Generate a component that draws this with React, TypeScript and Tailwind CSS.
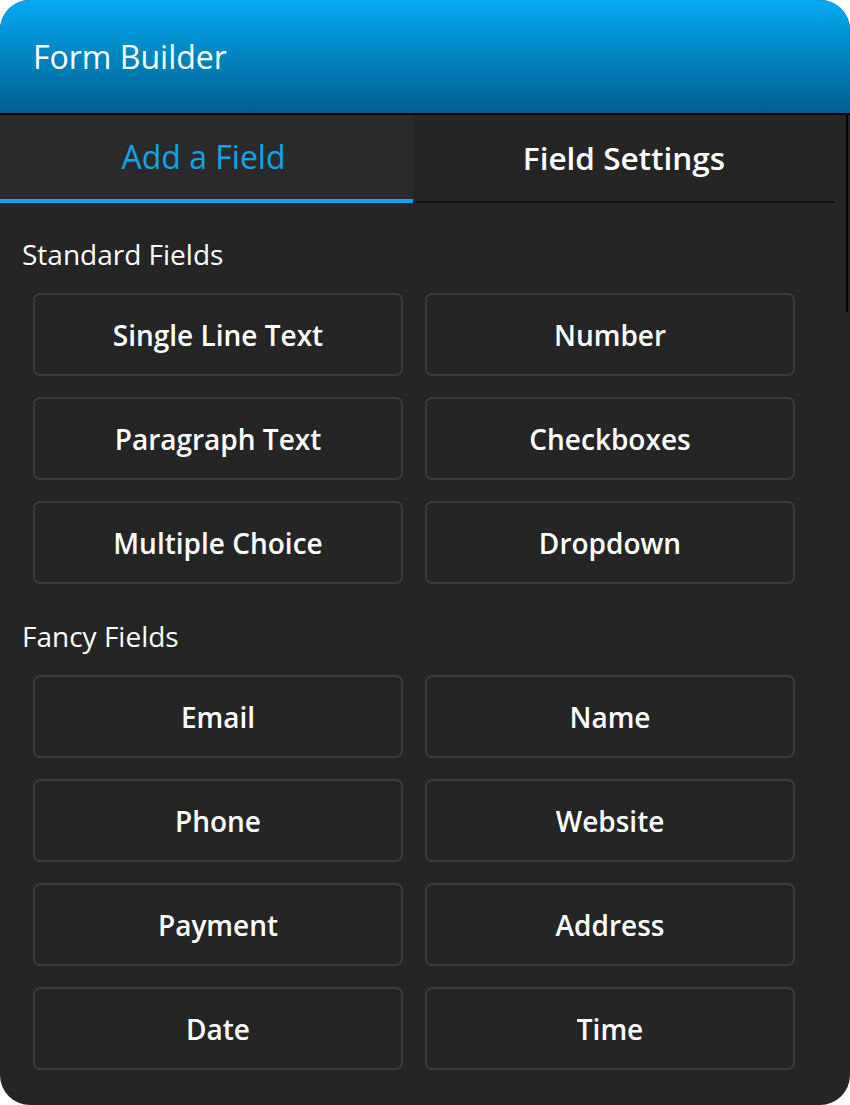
const standardFields = [
  "Single Line Text",
  "Number",
  "Paragraph Text",
  "Checkboxes",
  "Multiple Choice",
  "Dropdown",
];

const fancyFields = [
  "Email",
  "Name",
  "Phone",
  "Website",
  "Payment",
  "Address",
  "Date",
  "Time",
];

function FieldGrid({ fields }: { fields: string[] }) {
  return (
    <div className="ml-[11px] grid w-[762px] grid-cols-2 gap-x-[22px] gap-y-[21px]">
      {fields.map((f) => (
        <button
          key={f}
          className="flex h-[83px] items-center justify-center rounded-[7px] border-2 border-[#3c3c3c] bg-[#252525] text-[28px] font-semibold text-white"
        >
          {f}
        </button>
      ))}
    </div>
  );
}

export default function App() {
  return (
    <div
      className="min-h-[1105px] w-[850px] bg-white"
      style={{ fontFamily: '"Open Sans", "Noto Sans", sans-serif' }}
    >
      <div className="flex h-[1105px] flex-col overflow-hidden rounded-[30px] bg-[#252525]">
        {/* header */}
        <div className="flex h-[113px] shrink-0 items-center bg-gradient-to-b from-[#04aaf4] to-[#006090] px-[33px]">
          <h1 className="text-[32px] leading-none text-white">Form Builder</h1>
        </div>
        <div className="h-[2px] shrink-0 bg-black" />

        <div className="flex flex-1">
          <div className="flex-1">
            {/* tabs */}
            <div className="flex h-[88px]">
              <div className="flex w-[413px] items-center justify-center border-b-4 border-[#0ea5e9] bg-[#2a2a2a] pr-[6px] text-[32px] font-medium text-[#0ea5e9]">
                Add a Field
              </div>
              <div className="flex w-[422px] items-center justify-center border-b-2 border-[#111111] bg-[#252525] text-[31.5px] font-semibold text-white">
                Field Settings
              </div>
            </div>

            {/* fields */}
            <div className="px-[22px] pt-[33px]">
              <p className="mb-[21px] text-[28px] leading-[36px] text-white">
                Standard Fields
              </p>
              <FieldGrid fields={standardFields} />
              <p className="mb-[21px] mt-[34px] text-[28px] leading-[36px] text-white">
                Fancy Fields
              </p>
              <FieldGrid fields={fancyFields} />
            </div>
          </div>

          {/* scroll track */}
          <div className="w-[4px]">
            <div className="h-[197px] w-[2px] bg-black" />
          </div>
        </div>
      </div>
    </div>
  );
}
